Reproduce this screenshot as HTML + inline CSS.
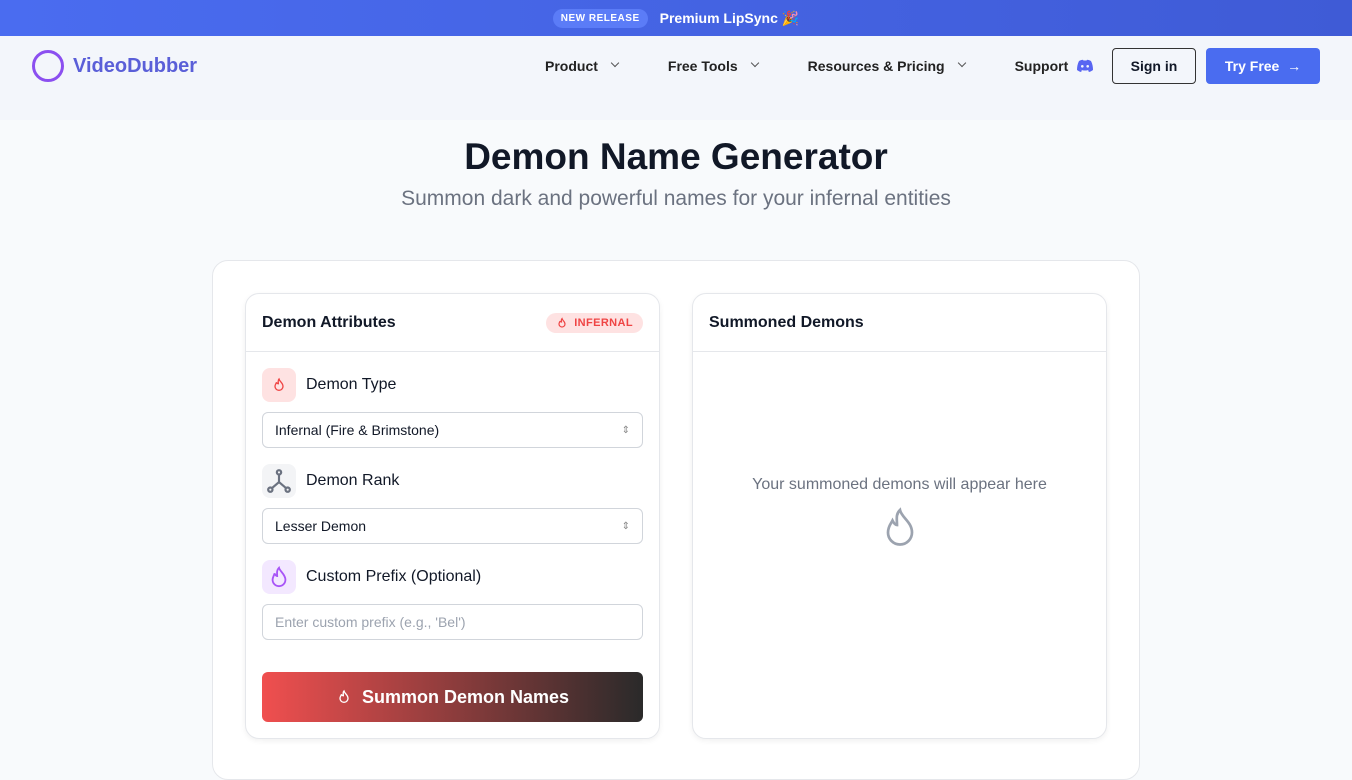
<!DOCTYPE html>
<html><head><meta charset="utf-8"><style>
*{box-sizing:border-box;margin:0;padding:0}
body{width:1352px;height:760px;overflow:hidden;background:#f8fafc;font-family:"Liberation Sans",sans-serif;color:#111827}
.top{height:36px;background:linear-gradient(90deg,#4a6cf0,#3f5bd6);display:flex;align-items:center;justify-content:center;gap:12px;color:#fff}
.badge{background:#5b7cf7;border-radius:10px;font-size:10px;font-weight:700;padding:4px 8px;letter-spacing:.5px}
.top b{font-size:14px}
header{height:84px;background:#f3f6fb;position:relative}
.logo{position:absolute;left:32px;top:14px;height:32px;display:flex;align-items:center;gap:9px;font-weight:700;font-size:20px;color:#5a5fd8}
.logo i{width:32px;height:32px;border:3.5px solid #8b4ff0;border-radius:50%;display:block}
nav{position:absolute;left:545px;top:12px;height:36px;display:flex;align-items:center;font-size:14px;font-weight:700;color:#222}
nav>span{margin-right:50px;display:flex;align-items:center}
nav span.c:after{content:"";display:inline-block;width:5px;height:5px;border-right:1.3px solid #555;border-bottom:1.3px solid #555;transform:rotate(45deg);margin-left:14px;position:relative;top:-3px}
.si{position:absolute;left:1112px;top:12px;width:84px;height:36px;border:1px solid #333;border-radius:4px;display:flex;align-items:center;justify-content:center;font-size:14px;font-weight:700}
.tf{position:absolute;left:1206px;top:12px;width:114px;height:36px;background:#4a6cf0;border-radius:4px;color:#fff;display:flex;align-items:center;justify-content:center;font-size:14px;font-weight:700}
h1{text-align:center;font-size:37px;margin-top:16px;color:#111827}
.sub{text-align:center;font-size:21px;color:#6b7280;margin-top:9px}
.card{position:absolute;left:212px;top:260px;width:928px;height:520px;background:#fff;border:1px solid #e5e7eb;border-radius:16px}
.p{position:absolute;background:#fff;border:1px solid #e5e7eb;border-radius:14px;box-shadow:0 2px 6px rgba(0,0,0,.06)}
.ph{height:58px;border-bottom:1px solid #e5e7eb;display:flex;align-items:center;padding:0 16px;font-weight:700;font-size:16px;justify-content:space-between}
.inf{background:#fee2e2;color:#ef4444;font-size:11px;font-weight:700;border-radius:10px;padding:4px 10px;letter-spacing:.4px;display:flex;align-items:center;gap:6px}
.lab{display:flex;align-items:center;gap:10px;font-size:16px;margin:16px 16px 10px}
.ic{width:34px;height:34px;border-radius:8px;display:flex;align-items:center;justify-content:center}
.sel{margin:0 16px;height:36px;border:1px solid #d1d5db;border-radius:6px;display:flex;align-items:center;padding:0 12px;font-size:14px;justify-content:space-between}
.btn{position:absolute;left:16px;top:378px;width:381px;height:50px;border-radius:6px;background:linear-gradient(90deg,#f04f4f,#2a2a2a);color:#fff;font-size:18px;font-weight:700;display:flex;align-items:center;justify-content:center;gap:10px}
</style></head><body>
<div class="top"><span class="badge">NEW RELEASE</span><b>Premium LipSync 🎉</b></div>
<header>
<div class="logo"><i></i>VideoDubber</div>
<nav><span class="c">Product</span><span class="c">Free Tools</span><span class="c">Resources &amp; Pricing</span><span>Support <svg style="margin-left:8px" width="18" height="14" viewBox="0 0 18 14"><path d="M3 2c2-1 3-1.3 4-1.3l.4.8h3.2l.4-.8c1 0 2 .3 4 1.3 1.5 3 2 6 2 9-1.5 1.2-3 1.8-4 2l-1-1.5c.8-.3 1.3-.6 1.8-1-3 1.4-6.6 1.4-9.6 0 .5.4 1 .7 1.8 1l-1 1.5c-1-.2-2.5-.8-4-2 0-3 .5-6 2-9z" fill="#5865f2"/><circle cx="6.3" cy="7.3" r="1.3" fill="#f3f6fb"/><circle cx="11.7" cy="7.3" r="1.3" fill="#f3f6fb"/></svg></span></nav>
<div class="si">Sign in</div><div class="tf">Try Free &nbsp;→</div>
</header>
<h1>Demon Name Generator</h1>
<div class="sub">Summon dark and powerful names for your infernal entities</div>
<div class="card">
<div class="p" style="left:32px;top:32px;width:415px;height:446px">
<div class="ph">Demon Attributes <span class="inf"><svg width="12" height="12" viewBox="0 0 24 24" fill="none" stroke="#ef4444" stroke-width="2.4"><path d="M12 3c1 4 6 6 6 11a6 6 0 0 1-12 0c0-3 2-4 2-6 1 2 2 2 3 2 0-3-1-5 1-7z"/></svg>INFERNAL</span></div>
<div class="lab"><div class="ic" style="background:#fee2e2;color:#ef4444">
<svg width="16" height="16" viewBox="0 0 24 24" fill="none" stroke="#ef4444" stroke-width="2"><path d="M12 3c1 4 6 6 6 11a6 6 0 0 1-12 0c0-3 2-4 2-6 1 2 2 2 3 2 0-3-1-5 1-7z"/></svg></div>Demon Type</div>
<div class="sel">Infernal (Fire &amp; Brimstone)<span style="color:#888;font-size:10px">⇕</span></div>
<div class="lab"><div class="ic" style="background:#f3f4f6"><svg width="26" height="26" viewBox="0 0 24 24" fill="none" stroke="#6b7280" stroke-width="2"><circle cx="12" cy="4" r="2"/><circle cx="4" cy="20" r="2"/><circle cx="20" cy="20" r="2"/><path d="M12 6v7l-7 6M12 13l7 6"/></svg></div>Demon Rank</div>
<div class="sel">Lesser Demon<span style="color:#888;font-size:10px">⇕</span></div>
<div class="lab"><div class="ic" style="background:#f3e8ff"><svg width="22" height="22" viewBox="0 0 24 24" fill="none" stroke="#a855f7" stroke-width="2"><path d="M12 2c1 4 7 7 7 13a7 7 0 0 1-14 0c0-3 2-5 2-7 1 2 2 3 3 3 0-3-1-6 2-9z"/></svg></div>Custom Prefix (Optional)</div>
<div class="sel" style="color:#9ca3af">Enter custom prefix (e.g., 'Bel')</div>
<div class="btn"><svg width="16" height="18" viewBox="0 0 24 24" fill="none" stroke="#fff" stroke-width="2"><path d="M12 3c1 4 6 6 6 11a6 6 0 0 1-12 0c0-3 2-4 2-6 1 2 2 2 3 2 0-3-1-5 1-7z"/></svg>Summon Demon Names</div>
</div>
<div class="p" style="left:479px;top:32px;width:415px;height:446px">
<div class="ph">Summoned Demons</div>
<div style="text-align:center;color:#6b7280;font-size:16px;margin-top:124px">Your summoned demons will appear here</div>
<div style="text-align:center;margin-top:12px"><svg width="36" height="44" viewBox="0 0 24 28" fill="none" stroke="#9ca3af" stroke-width="1.8"><path d="M12 2c1 5 8 8 8 15a8 8 0 0 1-16 0c0-4 2-6 3-8 1 2 2 3 3 3 0-4-1-7 2-10z"/></svg></div>
</div>
</div>
</body></html>
